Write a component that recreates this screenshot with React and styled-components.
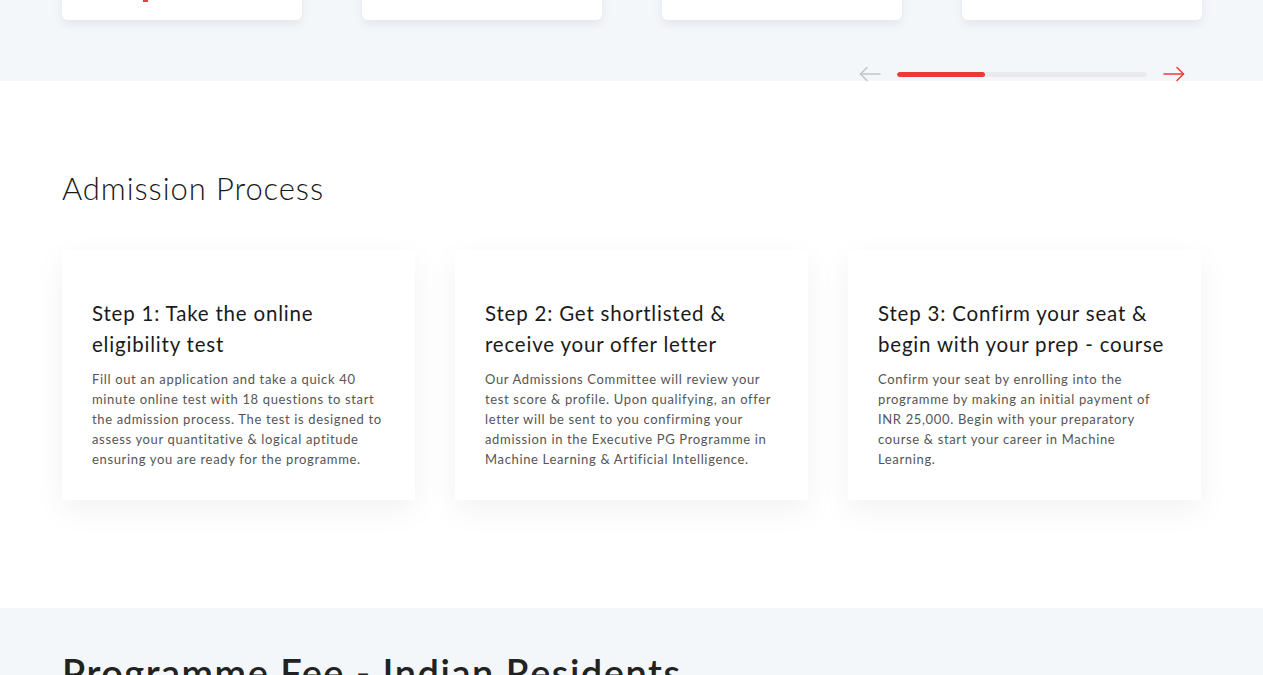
import React from "react";
import styled, { createGlobalStyle } from "styled-components";

const Global = createGlobalStyle`
  html, body { margin: 0; padding: 0; background: #fff; }
  body { font-family: "Lato", "Open Sans", sans-serif; color: #222; overflow: hidden; }
  * { box-sizing: border-box; }
`;

const Page = styled.div`
  width: 1263px;
`;

const TopSection = styled.section`
  background: #f4f7fa;
  height: 81px;
  padding: 0 62px;
  display: flex;
  flex-direction: column;
`;

const LogoRow = styled.div`
  display: flex;
  gap: 60px;
  margin-top: -100px;
`;

const LogoCard = styled.div`
  width: 240px;
  height: 120px;
  flex: none;
  background: #fff;
  border-radius: 6px;
  box-shadow: 0 4px 10px rgba(40, 60, 80, 0.09);
  display: flex;
  align-items: flex-end;
  justify-content: ${(p) => p.$align || "center"};
  padding-bottom: 18px;
  padding-left: ${(p) => p.$pl || 0}px;
`;

const RedMark = styled.div`
  width: 5px;
  height: 20px;
  background: #ee3a43;
`;

const TinyText = styled.div`
  font-size: 9px;
  letter-spacing: 3px;
  color: #999;
  line-height: 1;
  margin-bottom: 16px;
  transform: translateY(-2px);
`;

const Controls = styled.div`
  display: flex;
  align-items: center;
  justify-content: flex-end;
  margin-top: 46px;
  margin-right: 16px;
  gap: 16px;
`;

const ArrowBtn = styled.button`
  border: 0;
  background: none;
  padding: 0;
  width: 22px;
  height: 16px;
  display: flex;
  align-items: center;
  justify-content: center;
  color: ${(p) => (p.$active ? "#ee3a3a" : "#c2c4c6")};
  cursor: pointer;
`;

const Track = styled.div`
  width: 250px;
  height: 5px;
  border-radius: 3px;
  background: #e8eaed;
  overflow: hidden;
  display: flex;
`;

const Fill = styled.div`
  height: 100%;
  background: #ee3a36;
  border-radius: 3px;
`;

const AdmissionSection = styled.section`
  background: #fff;
  padding: 89px 62px 108px;
`;

const SectionTitle = styled.h2`
  margin: 0;
  font-weight: 300;
  font-size: 31px;
  line-height: 36px;
  color: #1a1a1a;
  letter-spacing: 0.9px;
`;

const Steps = styled.div`
  display: grid;
  grid-template-columns: repeat(3, 353px);
  gap: 40px;
  margin-top: 44px;
`;

const StepCard = styled.div`
  height: 250px;
  background: #fff;
  box-shadow: 0 10px 30px rgba(0, 0, 0, 0.055);
  padding: 48px 26px 30px 30px;
`;

const StepTitle = styled.h3`
  margin: 0 0 9px;
  font-weight: 400;
  font-size: 20.5px;
  line-height: 31px;
  color: #1a1a1a;
  letter-spacing: 0.8px;
`;

const StepText = styled.p`
  margin: 0;
  font-size: 13px;
  line-height: 20px;
  color: #555;
  letter-spacing: 0.65px;
`;

const FeeSection = styled.section`
  background: #f4f7fa;
  padding: 42px 62px 40px;
`;

const FeeTitle = styled.h2`
  margin: 0;
  font-weight: 600;
  font-size: 38px;
  line-height: 44px;
  color: #222;
  letter-spacing: 1.5px;
`;

const Arrow = ({ dir }) => (
  <svg width="22" height="16" viewBox="0 0 22 16" fill="none" stroke="currentColor" strokeWidth="1.5" strokeLinecap="round" strokeLinejoin="round">
    {dir === "left" ? (
      <>
        <path d="M21 8H1.5" />
        <path d="M8 1.5L1.5 8L8 14.5" />
      </>
    ) : (
      <>
        <path d="M1 8h19.5" />
        <path d="M14 1.5L20.5 8L14 14.5" />
      </>
    )}
  </svg>
);

const steps = [
  {
    title: "Step 1: Take the online eligibility test",
    text: "Fill out an application and take a quick 40 minute online test with 18 questions to start the admission process. The test is designed to assess your quantitative & logical aptitude ensuring you are ready for the programme.",
  },
  {
    title: "Step 2: Get shortlisted & receive your offer letter",
    text: "Our Admissions Committee will review your test score & profile. Upon qualifying, an offer letter will be sent to you confirming your admission in the Executive PG Programme in Machine Learning & Artificial Intelligence.",
  },
  {
    title: "Step 3: Confirm your seat & begin with your prep - course",
    text: "Confirm your seat by enrolling into the programme by making an initial payment of INR 25,000. Begin with your preparatory course & start your career in Machine Learning.",
  },
];

export default function App() {
  return (
    <Page>
      <Global />
      <TopSection>
        <LogoRow>
          <LogoCard $align="flex-start" $pl={81}>
            <RedMark />
          </LogoCard>
          <LogoCard />
          <LogoCard>
            <TinyText>SOLUTIONS</TinyText>
          </LogoCard>
          <LogoCard />
        </LogoRow>
        <Controls>
          <ArrowBtn aria-label="Previous">
            <Arrow dir="left" />
          </ArrowBtn>
          <Track>
            <Fill style={{ width: `${(88 / 250) * 100}%` }} />
          </Track>
          <ArrowBtn $active aria-label="Next">
            <Arrow dir="right" />
          </ArrowBtn>
        </Controls>
      </TopSection>
      <AdmissionSection>
        <SectionTitle>Admission Process</SectionTitle>
        <Steps>
          {steps.map((s) => (
            <StepCard key={s.title}>
              <StepTitle>{s.title}</StepTitle>
              <StepText>{s.text}</StepText>
            </StepCard>
          ))}
        </Steps>
      </AdmissionSection>
      <FeeSection>
        <FeeTitle>Programme Fee - Indian Residents</FeeTitle>
      </FeeSection>
    </Page>
  );
}
